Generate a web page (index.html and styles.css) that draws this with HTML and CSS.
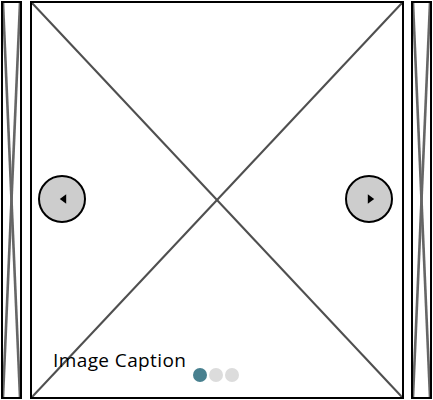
FILE: index.html
```html
<!DOCTYPE html>
<html>
<head>
<meta charset="utf-8">
<link rel="stylesheet" href="styles.css">
</head>
<body>
<div class="carousel">
  <div class="peek">
    <svg class="ph" viewBox="0 0 100 100" preserveAspectRatio="none"><line x1="0" y1="0" x2="100" y2="100"/><line x1="100" y1="0" x2="0" y2="100"/></svg>
  </div>
  <div class="slide">
    <svg class="ph" viewBox="0 0 100 100" preserveAspectRatio="none"><line x1="0" y1="0" x2="100" y2="100"/><line x1="100" y1="0" x2="0" y2="100"/></svg>
    <div class="overlay">
      <div class="nav-row">
        <button class="arrow prev"><svg viewBox="0 0 10 12" width="8" height="12"><polygon points="9,0 9,12 1,6"/></svg></button>
        <button class="arrow next"><svg viewBox="0 0 10 12" width="8" height="12"><polygon points="1,0 1,12 9,6"/></svg></button>
      </div>
      <div class="bottom">
        <div class="caption">Image Caption</div>
        <div class="dots"><span class="dot active"></span><span class="dot"></span><span class="dot"></span></div>
      </div>
    </div>
  </div>
  <div class="peek right">
    <svg class="ph" viewBox="0 0 100 100" preserveAspectRatio="none"><line x1="0" y1="0" x2="100" y2="100"/><line x1="100" y1="0" x2="0" y2="100"/></svg>
  </div>
</div>
</body>
</html>
```
FILE: styles.css
```css
html, body { margin: 0; padding: 0; background: #fff; }
body { width: 433px; height: 400px; overflow: hidden; }
.carousel {
  display: flex;
  padding: 1px 0 0 1px;
  gap: 8px;
  height: 398px;
}
.peek {
  width: 21px;
  height: 398px;
  box-sizing: border-box;
  border: 2px solid #000;
  position: relative;
  background: #fff;
}
.peek.right { margin-left: -1px; }
.slide {
  width: 374px;
  height: 398px;
  box-sizing: border-box;
  border: 2px solid #000;
  position: relative;
  background: #fff;
}
.ph {
  position: absolute;
  inset: 0;
  width: 100%;
  height: 100%;
}
.ph line {
  stroke: #4f4f4f;
  stroke-width: 2.2;
  vector-effect: non-scaling-stroke;
}
.peek .ph line { stroke: #666; stroke-width: 2.6; }
.overlay {
  position: absolute;
  inset: 0;
  display: flex;
  flex-direction: column;
}
.nav-row {
  display: flex;
  justify-content: space-between;
  align-items: center;
  padding: 172px 9px 0 6px;
}
.arrow {
  width: 48px;
  height: 48px;
  border-radius: 50%;
  border: 2.5px solid #000;
  background: #cdcdcd;
  padding: 0;
  display: flex;
  align-items: center;
  justify-content: center;
}
.arrow svg { fill: #000; }
.prev svg { margin-left: 1px; }
.next svg { margin-left: 3px; }
.bottom {
  margin-top: auto;
  position: relative;
  height: 50px;
}
.caption {
  position: absolute;
  left: 21px;
  top: 1px;
  font-family: "Open Sans", sans-serif;
  font-size: 19px;
  letter-spacing: 0.4px;
  line-height: 24px;
  color: #000;
}
.dots {
  position: absolute;
  left: 161px;
  top: 21px;
  display: flex;
  gap: 2px;
}
.dot {
  width: 14px;
  height: 14px;
  border-radius: 50%;
  background: #dcdcdc;
}
.dot.active { background: #48808f; }
```
